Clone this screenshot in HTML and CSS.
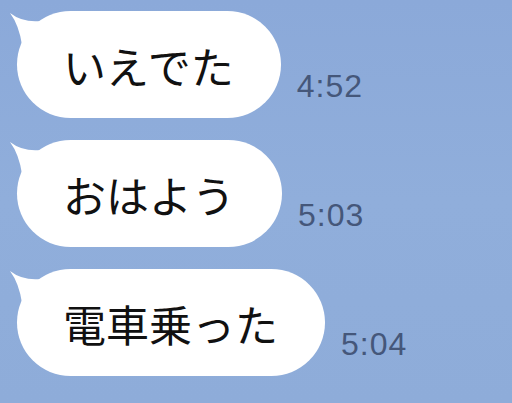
FILE: index.html
```html
<!DOCTYPE html>
<html lang="ja">
<head>
    <meta charset="UTF-8">
    <meta name="viewport" content="width=device-width, initial-scale=1.0">
    <title>Chat</title>
    <link rel="stylesheet" href="styles.css">
</head>
<body>
    <div class="chat">
        <div class="row">
            <div class="bubble">
                <svg class="tail" width="34" height="36" viewBox="0 0 34 36"><path d="M1 2 Q14 12 32 10 L32 32 L13 34 Q10 14 1 2 Z" fill="#fff"/></svg>
                いえでた
            </div>
            <span class="time">4:52</span>
        </div>
        <div class="row">
            <div class="bubble">
                <svg class="tail" width="34" height="36" viewBox="0 0 34 36"><path d="M1 2 Q14 12 32 10 L32 32 L13 34 Q10 14 1 2 Z" fill="#fff"/></svg>
                おはよう
            </div>
            <span class="time">5:03</span>
        </div>
        <div class="row">
            <div class="bubble">
                <svg class="tail" width="34" height="36" viewBox="0 0 34 36"><path d="M1 2 Q14 12 32 10 L32 32 L13 34 Q10 14 1 2 Z" fill="#fff"/></svg>
                電車乗った
            </div>
            <span class="time">5:04</span>
        </div>
    </div>
</body>
</html>
```

FILE: styles.css
```css
body {
    margin: 0;
    height: 403px;
    overflow: hidden;
    background: linear-gradient(180deg, #8ba9d9 0%, #90aedb 50%, #8eacd9 100%);
    font-family: "Noto Sans CJK JP", "Noto Sans", sans-serif;
}

.chat {
    display: flex;
    flex-direction: column;
    gap: 22px;
    padding: 11px 0 0 17px;
}

.row {
    display: flex;
    align-items: flex-end;
    gap: 16px;
}

.bubble {
    position: relative;
    display: flex;
    align-items: center;
    height: 107px;
    padding: 0 47px 0 46px;
    background: #fff;
    border-radius: 54px;
    font-size: 43px;
    color: #111;
    white-space: nowrap;
}

.tail {
    position: absolute;
    left: -8px;
    top: 0;
}

.time {
    font-family: "Liberation Sans", Arial, sans-serif;
    font-size: 32px;
    letter-spacing: 1px;
    color: #45577a;
    margin-bottom: 16px;
    line-height: 1;
}
```
